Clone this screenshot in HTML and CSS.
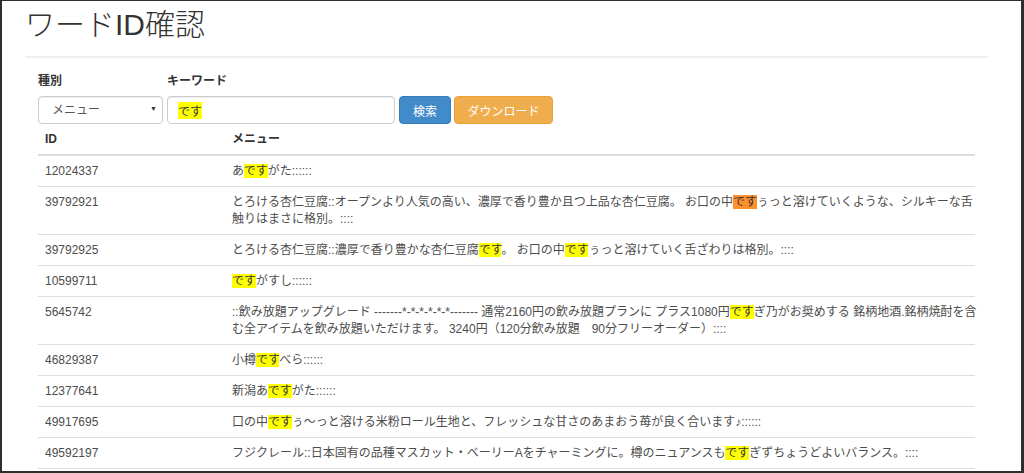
FILE: index.html
```html
<!DOCTYPE html>
<html lang="ja">
<head>
  <meta charset="UTF-8">
  <title>ワードID確認</title>
  <link rel="stylesheet" href="styles.css">
</head>
<body>
<div class="window">
  <div class="container">
    <h1>ワードID確認</h1>
    <hr>

    <form class="search">
      <div class="field">
        <label>種別</label>
        <div class="select-wrap">
          <select class="form-control">
            <option>メニュー</option>
          </select>
        </div>
      </div>
      <div class="field">
        <label>キーワード</label>
        <div class="form-control keyword"><span class="hl">です</span></div>
      </div>
      <div class="buttons">
        <button type="button" class="btn btn-primary">検索</button>
        <button type="button" class="btn btn-warning">ダウンロード</button>
      </div>
    </form>

    <table class="table">
      <thead>
        <tr><th class="col-id">ID</th><th>メニュー</th></tr>
      </thead>
      <tbody>
        <tr><td>12024337</td><td>あ<span class="hl">です</span>がた::::::</td></tr>
        <tr><td>39792921</td><td>とろける杏仁豆腐::オープンより人気の高い、濃厚で香り豊か且つ上品な杏仁豆腐。 お口の中<span class="hl now">です</span>ぅっと溶けていくような、シルキーな舌<br>触りはまさに格別。::::</td></tr>
        <tr><td>39792925</td><td>とろける杏仁豆腐::濃厚で香り豊かな杏仁豆腐<span class="hl">です</span>。 お口の中<span class="hl">です</span>ぅっと溶けていく舌ざわりは格別。::::</td></tr>
        <tr><td>10599711</td><td><span class="hl">です</span>がすし::::::</td></tr>
        <tr><td>5645742</td><td>::飲み放題アップグレード -------*-*-*-*-*-*------- 通常2160円の飲み放題プランに プラス1080円<span class="hl">です</span>ぎ乃がお奨めする 銘柄地酒.銘柄焼酎を含<br>む全アイテムを飲み放題いただけます。 3240円（120分飲み放題　90分フリーオーダー）::::</td></tr>
        <tr><td>46829387</td><td>小樽<span class="hl">です</span>べら::::::</td></tr>
        <tr><td>12377641</td><td>新潟あ<span class="hl">です</span>がた::::::</td></tr>
        <tr><td>49917695</td><td>口の中<span class="hl">です</span>ぅ～っと溶ける米粉ロール生地と、フレッシュな甘さのあまおう苺が良く合います♪::::::</td></tr>
        <tr><td>49592197</td><td>フジクレール::日本固有の品種マスカット・ベーリーAをチャーミングに。樽のニュアンスも<span class="hl">です</span>ぎずちょうどよいバランス。::::</td></tr>
      </tbody>
    </table>
  </div>
</div>
</body>
</html>
```

FILE: styles.css
```css
body {
  margin: 0;
  font-family: "Liberation Sans", "Noto Sans CJK JP", sans-serif;
  font-size: 12px;
  color: #333;
  background: #fff;
}
.window {
  width: 1024px;
  height: 473px;
  box-sizing: border-box;
  border-style: solid;
  border-color: #2e2e2e;
  border-width: 1px 3px 2px 2px;
  overflow: hidden;
  background: #fff;
}
.container {
  padding: 4px 33px 0 23px;
}
h1 {
  margin: 0;
  font-size: 30px;
  line-height: 40px;
  font-weight: 300;
  color: #333;
}
hr {
  margin: 11px 0 15px;
  border: 0;
  border-top: 2px solid #efefef;
}
.search {
  display: flex;
  align-items: flex-end;
  gap: 4px;
  margin: 0 13px;
}
.buttons {
  display: flex;
  gap: 3px;
}
.field label {
  display: block;
  font-weight: bold;
  line-height: 17px;
  margin-bottom: 6px;
}
.form-control {
  box-sizing: border-box;
  height: 28px;
  border: 1px solid #ccc;
  border-radius: 4px;
  box-shadow: inset 0 1px 1px rgba(0, 0, 0, 0.075);
  background: #fff;
  font-family: inherit;
  font-size: 12px;
  color: #555;
}
.select-wrap {
  position: relative;
}
.select-wrap::after {
  content: "▼";
  position: absolute;
  right: 6px;
  top: 9px;
  font-size: 7px;
  color: #333;
  pointer-events: none;
}
select.form-control {
  display: block;
  width: 125px;
  padding: 0 0 0 13px;
  appearance: none;
  -webkit-appearance: none;
}
.keyword {
  width: 228px;
  padding: 0 10px;
  display: flex;
  align-items: center;
  color: #333;
}
.btn {
  box-sizing: border-box;
  height: 28px;
  padding: 0 13px;
  border: 1px solid transparent;
  border-radius: 4px;
  font-family: inherit;
  font-size: 12px;
  color: #fff;
  cursor: pointer;
}
.btn-primary {
  width: 52px;
  padding: 0;
  background: #428bca;
  border-color: #357ebd;
}
.btn-warning {
  width: 99px;
  padding: 0;
  background: #f0ad4e;
  border-color: #eea236;
}
.hl {
  background: #ffff00;
  color: #333;
}
.hl.now {
  background: #fd8f2c;
}
.table {
  width: 937px;
  margin: 0 13px;
  border-collapse: collapse;
  table-layout: fixed;
}
.table th,
.table td {
  padding: 6.5px 7px;
  line-height: 17px;
  text-align: left;
  vertical-align: top;
}
.table th {
  font-weight: bold;
  color: #333;
  border-bottom: 2px solid #ddd;
}
.table td {
  color: #4d4d4d;
  border-bottom: 1px solid #ddd;
  white-space: nowrap;
}
.col-id {
  width: 173px;
}
```
